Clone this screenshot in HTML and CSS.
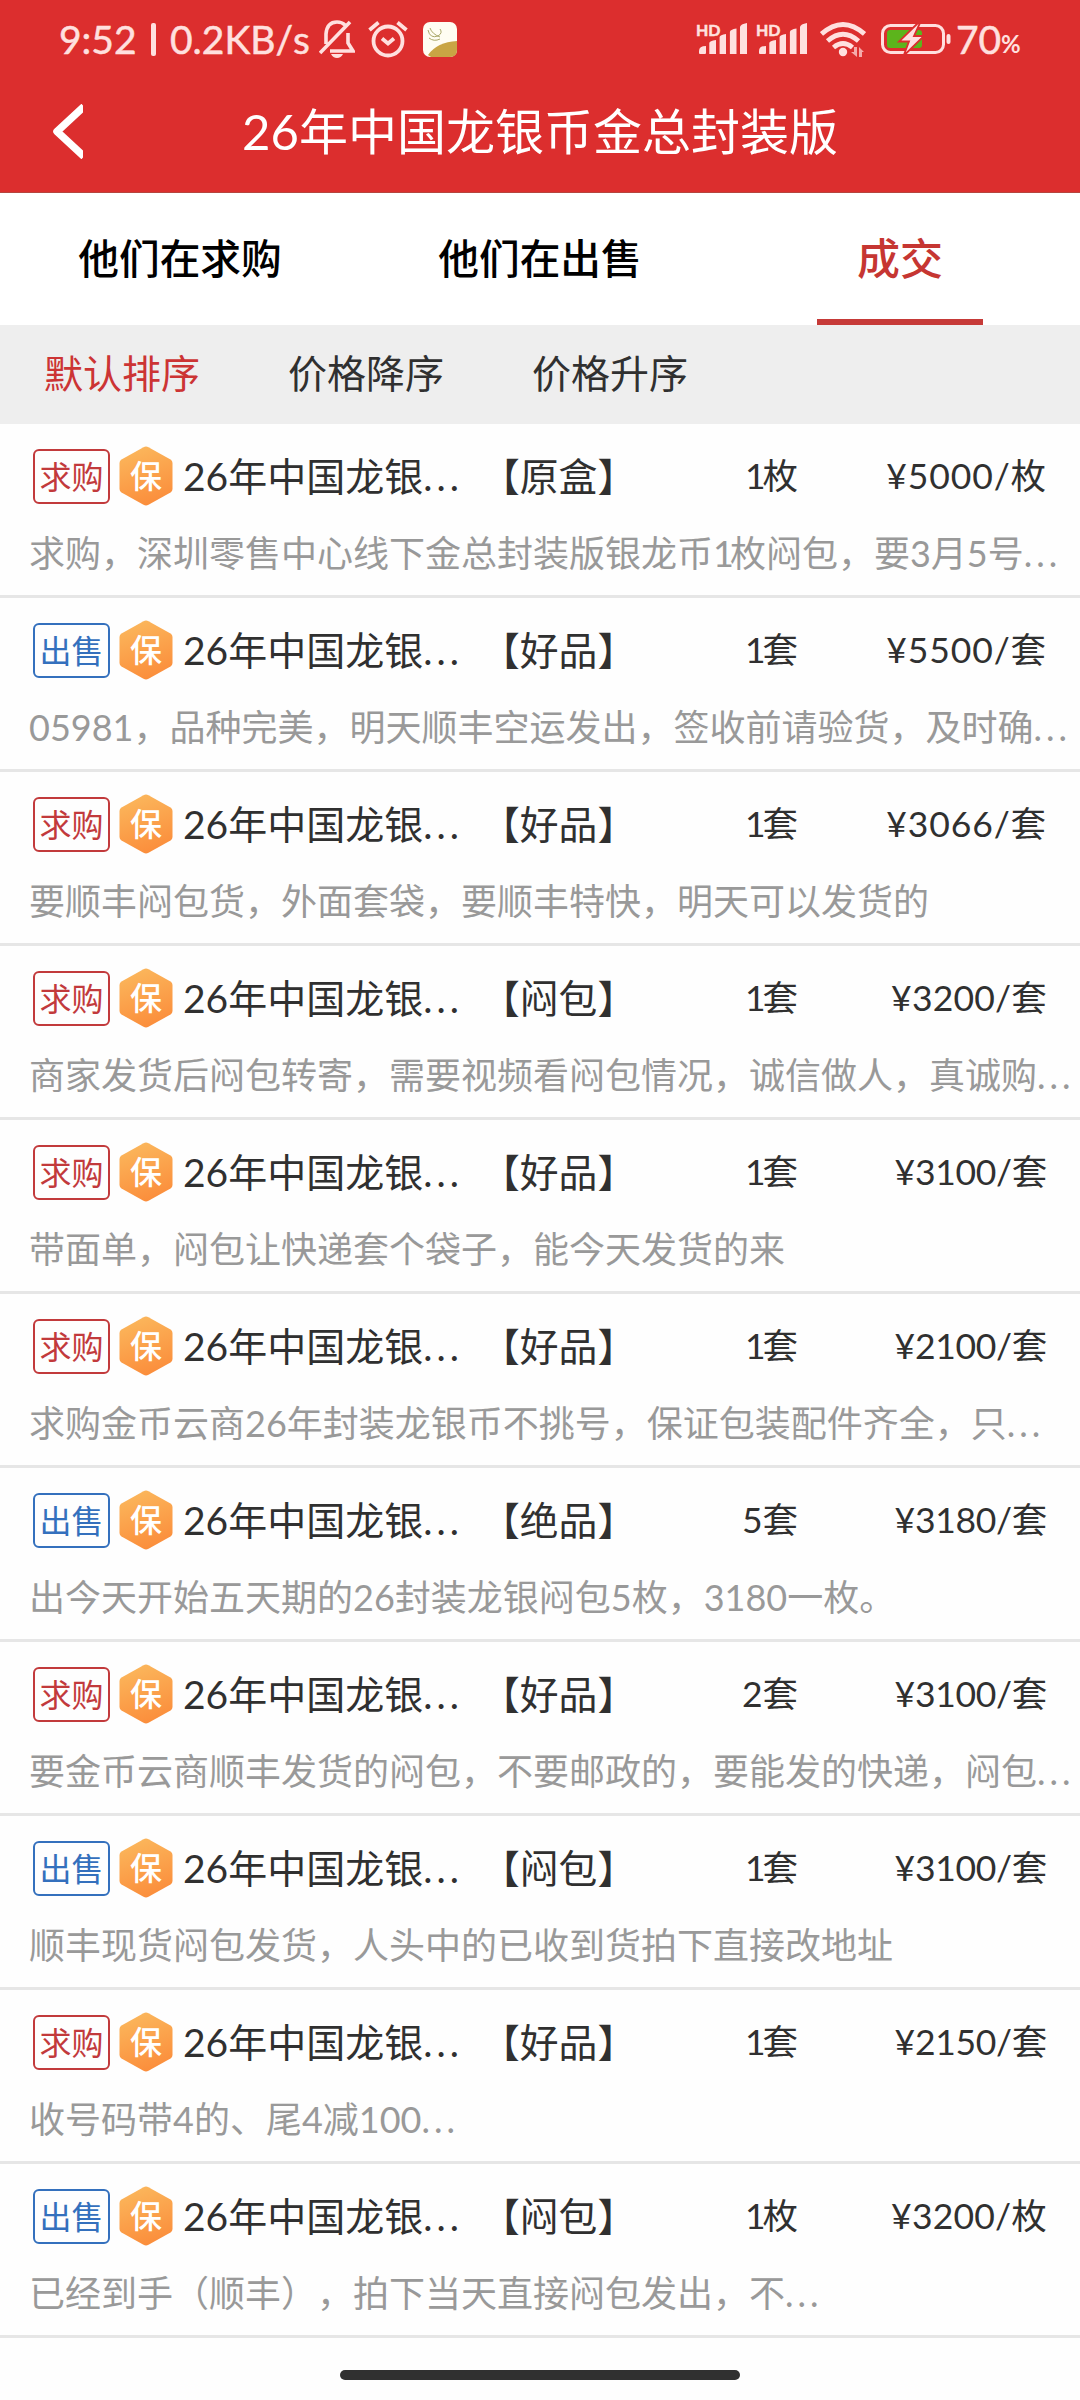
FILE: index.html
```html
<!DOCTYPE html>
<html lang="zh-CN">
<head>
<meta charset="utf-8">
<title>26年中国龙银币金总封装版</title>
<link rel="stylesheet" href="styles.css">
</head>
<body>
<svg class="defs" width="0" height="0" aria-hidden="true">
  <defs>
    <linearGradient id="shade" x1="0.3" y1="0" x2="0.6" y2="1">
      <stop offset="0" stop-color="#fbb75c"/>
      <stop offset="1" stop-color="#fb8d3b"/>
    </linearGradient>
    <symbol id="hex" viewBox="0 0 54 60">
      <path d="M24.5 1.2 Q27 0 29.5 1.2 L51.5 13.5 Q53.5 14.7 53.5 17 V43 Q53.5 45.3 51.5 46.5 L29.5 58.8 Q27 60 24.5 58.8 L2.5 46.5 Q.5 45.3 .5 43 V17 Q.5 14.7 2.5 13.5 Z" fill="url(#shade)"/>
    </symbol>
    <symbol id="signal" viewBox="0 0 48 31">
      <path d="M0 30V28Q0 23 7 23V30Q7 31 6 31H1Q0 31 0 30ZM10.300 31V20Q10.500 18 17 17V31ZM20.600 31V14Q21 12 27 11V31ZM30.900 31V9Q31 6.500 37.500 5.500V31ZM41 31V4Q41.500 1 48 0V31Z" fill="currentColor"/>
    </symbol>
  </defs>
</svg>

<header class="header">
  <div class="status">
    <span class="clock">9:52</span><span class="divider"></span><span class="speed">0.2KB/s</span>
    <svg class="bell" viewBox="0 0 36 38" fill="none" stroke="currentColor" stroke-width="3.600">
      <path d="M7 24V14Q8 2 18 2Q23 2 26 5M29 13V23L34 31H11M1 33L31 2"/><path d="M12 34H24Q22 38 18 38Q14 38 12 34Z" fill="currentColor" stroke="none"/>
    </svg>
    <svg class="alarm" viewBox="0 0 40 38" fill="none" stroke="currentColor" stroke-width="3.800">
      <circle cx="20" cy="21" r="14.500"/><path d="M1.500 10L10.500 2.500M38.500 10L29.500 2.500M14 18.500L20 23.500L26 18.500"/>
    </svg>
    <svg class="app" viewBox="0 0 34 35">
      <rect width="34" height="35" rx="7" fill="#fffdf2"/><path d="M5 33Q14 20 34 19V28Q34 35 27 35H8Z" fill="#c9a544"/><path d="M5 8Q7 17 15 14Q20 11 17 7M7 6Q9 12 17 15M6 16Q11 20 17 17" fill="none" stroke="#a9a768" stroke-width="1"/>
    </svg>
    <span class="grow"></span>
    <span class="net"><small>HD</small><svg><use href="#signal"/></svg></span>
    <span class="net"><small>HD</small><svg><use href="#signal"/></svg></span>
    <svg class="wifi" viewBox="0 0 46 35" fill="none" stroke="currentColor" stroke-width="4.800">
      <path d="M1.500 12Q23-7 44.500 12M7.500 19Q23 5.500 38.500 19M13.500 25.500Q23 17.500 32.500 25.500"/><circle cx="23" cy="30" r="4.200" fill="currentColor" stroke="none"/><path d="M31 30H34V25H37V35ZM39 35V25L44 30H42V35Z" fill="currentColor" stroke="none" opacity=".7"/>
    </svg>
    <svg class="battery" viewBox="0 0 70 34">
      <rect x="1.500" y="3.500" width="61" height="27" rx="8" fill="none" stroke="currentColor" stroke-width="3"/><rect x="6" y="8" width="35" height="18" rx="3" fill="#5cb41c"/><rect x="65.500" y="12" width="4" height="10" rx="2" fill="currentColor"/><path d="M37 1L18 19.500H28L22.500 34L43 14H33L39 1Z" fill="#ffdfe2" stroke="#dc2e2e" stroke-width="1.800"/>
    </svg>
    <span class="level">70</span><span class="percent">%</span>
  </div>
  <div class="titlebar">
    <svg class="back" viewBox="0 0 31 55"><path d="M32 2.500L5 27.500L32 52.500" fill="none" stroke="#fff" stroke-width="7.500" stroke-linejoin="round"/></svg>
    <h1>26年中国龙银币金总封装版</h1>
  </div>
</header>

<nav class="tabs">
  <a>他们在求购</a>
  <a>他们在出售</a>
  <a class="active"><span>成交</span></a>
</nav>

<div class="sorts"><span class="on">默认排序</span><span>价格降序</span><span>价格升序</span></div>

<main>
  <article><div class="line"><span class="tag buy">求购</span><span class="bao"><svg><use href="#hex"/></svg><b>保</b></span><span class="name">26年中国龙银<i>...</i></span><span class="grade">【原盒】</span><span class="qty one">1枚</span><span class="price wide">¥5000/枚</span></div><p>求购，深圳零售中心线下金总封装版银龙币<em>1</em>枚闷包，要3月5号<i>...</i></p></article>
  <article><div class="line"><span class="tag sell">出售</span><span class="bao"><svg><use href="#hex"/></svg><b>保</b></span><span class="name">26年中国龙银<i>...</i></span><span class="grade">【好品】</span><span class="qty one">1套</span><span class="price wide">¥5500/套</span></div><p>05981，品种完美，明天顺丰空运发出，签收前请验货，及时确<i>...</i></p></article>
  <article><div class="line"><span class="tag buy">求购</span><span class="bao"><svg><use href="#hex"/></svg><b>保</b></span><span class="name">26年中国龙银<i>...</i></span><span class="grade">【好品】</span><span class="qty one">1套</span><span class="price wide">¥3066/套</span></div><p>要顺丰闷包货，外面套袋，要顺丰特快，明天可以发货的</p></article>
  <article><div class="line"><span class="tag buy">求购</span><span class="bao"><svg><use href="#hex"/></svg><b>保</b></span><span class="name">26年中国龙银<i>...</i></span><span class="grade">【闷包】</span><span class="qty one">1套</span><span class="price">¥3200/套</span></div><p>商家发货后闷包转寄，需要视频看闷包情况，诚信做人，真诚购<i>...</i></p></article>
  <article><div class="line"><span class="tag buy">求购</span><span class="bao"><svg><use href="#hex"/></svg><b>保</b></span><span class="name">26年中国龙银<i>...</i></span><span class="grade">【好品】</span><span class="qty one">1套</span><span class="price narrow">¥3100/套</span></div><p>带面单，闷包让快递套个袋子，能今天发货的来</p></article>
  <article><div class="line"><span class="tag buy">求购</span><span class="bao"><svg><use href="#hex"/></svg><b>保</b></span><span class="name">26年中国龙银<i>...</i></span><span class="grade">【好品】</span><span class="qty one">1套</span><span class="price narrow">¥2100/套</span></div><p>求购金币云商26年封装龙银币不挑号，保证包装配件齐全，只<i>...</i></p></article>
  <article><div class="line"><span class="tag sell">出售</span><span class="bao"><svg><use href="#hex"/></svg><b>保</b></span><span class="name">26年中国龙银<i>...</i></span><span class="grade">【绝品】</span><span class="qty">5套</span><span class="price narrow">¥3180/套</span></div><p>出今天开始五天期的26封装龙银闷包5枚，3180一枚。</p></article>
  <article><div class="line"><span class="tag buy">求购</span><span class="bao"><svg><use href="#hex"/></svg><b>保</b></span><span class="name">26年中国龙银<i>...</i></span><span class="grade">【好品】</span><span class="qty">2套</span><span class="price narrow">¥3100/套</span></div><p>要金币云商顺丰发货的闷包，不要邮政的，要能发的快递，闷包<i>...</i></p></article>
  <article><div class="line"><span class="tag sell">出售</span><span class="bao"><svg><use href="#hex"/></svg><b>保</b></span><span class="name">26年中国龙银<i>...</i></span><span class="grade">【闷包】</span><span class="qty one">1套</span><span class="price narrow">¥3100/套</span></div><p>顺丰现货闷包发货，人头中的已收到货拍下直接改地址</p></article>
  <article><div class="line"><span class="tag buy">求购</span><span class="bao"><svg><use href="#hex"/></svg><b>保</b></span><span class="name">26年中国龙银<i>...</i></span><span class="grade">【好品】</span><span class="qty one">1套</span><span class="price narrow">¥2150/套</span></div><p>收号码带4的、尾4减100<i>...</i></p></article>
  <article><div class="line"><span class="tag sell">出售</span><span class="bao"><svg><use href="#hex"/></svg><b>保</b></span><span class="name">26年中国龙银<i>...</i></span><span class="grade">【闷包】</span><span class="qty one">1枚</span><span class="price">¥3200/枚</span></div><p>已经到手（顺丰），拍下当天直接闷包发出，不<i>...</i></p></article>
</main>

<footer class="home"><span></span></footer>
</body>
</html>
```

FILE: styles.css
```css
* { box-sizing: border-box; }
body {
  margin: 0;
  width: 1080px;
  height: 2400px;
  overflow: hidden;
  background: #fefefe;
  color: #303030;
  font-family: Lato, "Noto Sans CJK SC", sans-serif;
  font-weight: 400;
  font-kerning: none;
  text-spacing-trim: space-all;
  display: flex;
  flex-direction: column;
}
.defs { position: absolute; }
i { font-style: normal; letter-spacing: 4px; }
em { font-style: normal; letter-spacing: -4px; }

.header { height: 193px; background: #dc2e2e; border-bottom: 1px solid #b5463e; }
.status {
  height: 78px;
  padding: 0 58px 0 59px;
  display: flex;
  align-items: center;
  color: #ffe0df;
  font-size: 39px;
  line-height: 78px;
  -webkit-text-stroke: 0.5px currentColor;
}
.clock { width: 78px; }
.divider { width: 5px; height: 33px; margin: 0 14px 0 14px; background: currentColor; border-radius: 2px; }
.speed { width: 147px; }
.status svg { display: block; flex: none; }
.bell { width: 36px; height: 38px; margin-left: 2px; }
.alarm { width: 40px; height: 38px; margin-left: 13px; }
.app { width: 34px; height: 35px; margin-left: 15px; }
.grow { flex: 1; }
.net { width: 60px; height: 32px; display: grid; }
.net small { grid-area: 1 / 1; font: 700 16px/13px Lato, sans-serif; }
.net svg { grid-area: 1 / 1; width: 48px; height: 31px; margin-left: 3px; }
.wifi { width: 46px; height: 35px; margin-left: 4px; }
.battery { width: 70px; height: 34px; margin-left: 15px; }
.level { margin-left: 5px; width: 45px; font-size: 39px; }
.percent { width: 21px; font-size: 24px; padding-top: 10px; font-weight: 700; -webkit-text-stroke: 0; }
.titlebar { height: 106px; display: flex; justify-content: center; align-items: center; padding-right: 83px; }
.titlebar h1 { flex: 1; margin: 0; text-align: center; color: #fff; font-size: 49px; line-height: 60px; font-weight: 400; }
.back { width: 31px; height: 55px; margin-left: 52px; }

.tabs { height: 132px; display: grid; grid-template-columns: repeat(3, 1fr); color: #000; font-size: 40.700px; font-weight: 500; text-align: center; line-height: 131px; background: #fff; }
.tabs .active { color: #c63632; font-size: 43px; }
.active span { display: block; width: 166px; height: 132px; margin: 0 auto; border-bottom: 6px solid #c63a38; }

.sorts { height: 99px; padding-left: 44px; display: flex; gap: 88px; background: #eee; font-size: 39px; line-height: 97px; }
.sorts .on { color: #cc3434; }

article { height: 174px; padding: 24px 0 0 29px; border-bottom: 3px solid #e6e6e6; white-space: nowrap; }
.line { height: 56px; display: flex; align-items: center; line-height: 56px; padding-left: 4px; }
.tag { width: 77px; height: 55px; border: 2.500px solid; border-radius: 6px; font-size: 32px; line-height: 52px; text-align: center; }
.buy { color: #c23a3c; }
.sell { color: #3470bd; }
.bao { width: 54px; height: 60px; margin-left: 9px; display: grid; place-items: center; }
.bao svg, .bao b { grid-area: 1 / 1; }
.bao svg { width: 54px; height: 60px; }
.bao b { color: #fff; font-size: 32px; font-weight: 500; line-height: 56px; }
.name { margin-left: 10px; width: 298px; font-size: 39px; }
.grade { width: 156px; font-size: 38.800px; }
.qty { width: 161px; font-size: 35.500px; text-align: right; }
.one { letter-spacing: -3px; padding-right: 3px; }
.price { width: 249px; font-size: 35.500px; text-align: right; letter-spacing: 0.200px; }
.wide { letter-spacing: 0.900px; }
.narrow { letter-spacing: -0.300px; }
p { margin: 24px 0 0; color: #999; font-size: 36px; line-height: 50px; font-weight: 400; }

.home { flex: 1; display: flex; justify-content: center; padding-top: 32px; }
.home span { width: 400px; height: 10px; border-radius: 5px; background: #303030; }
```
